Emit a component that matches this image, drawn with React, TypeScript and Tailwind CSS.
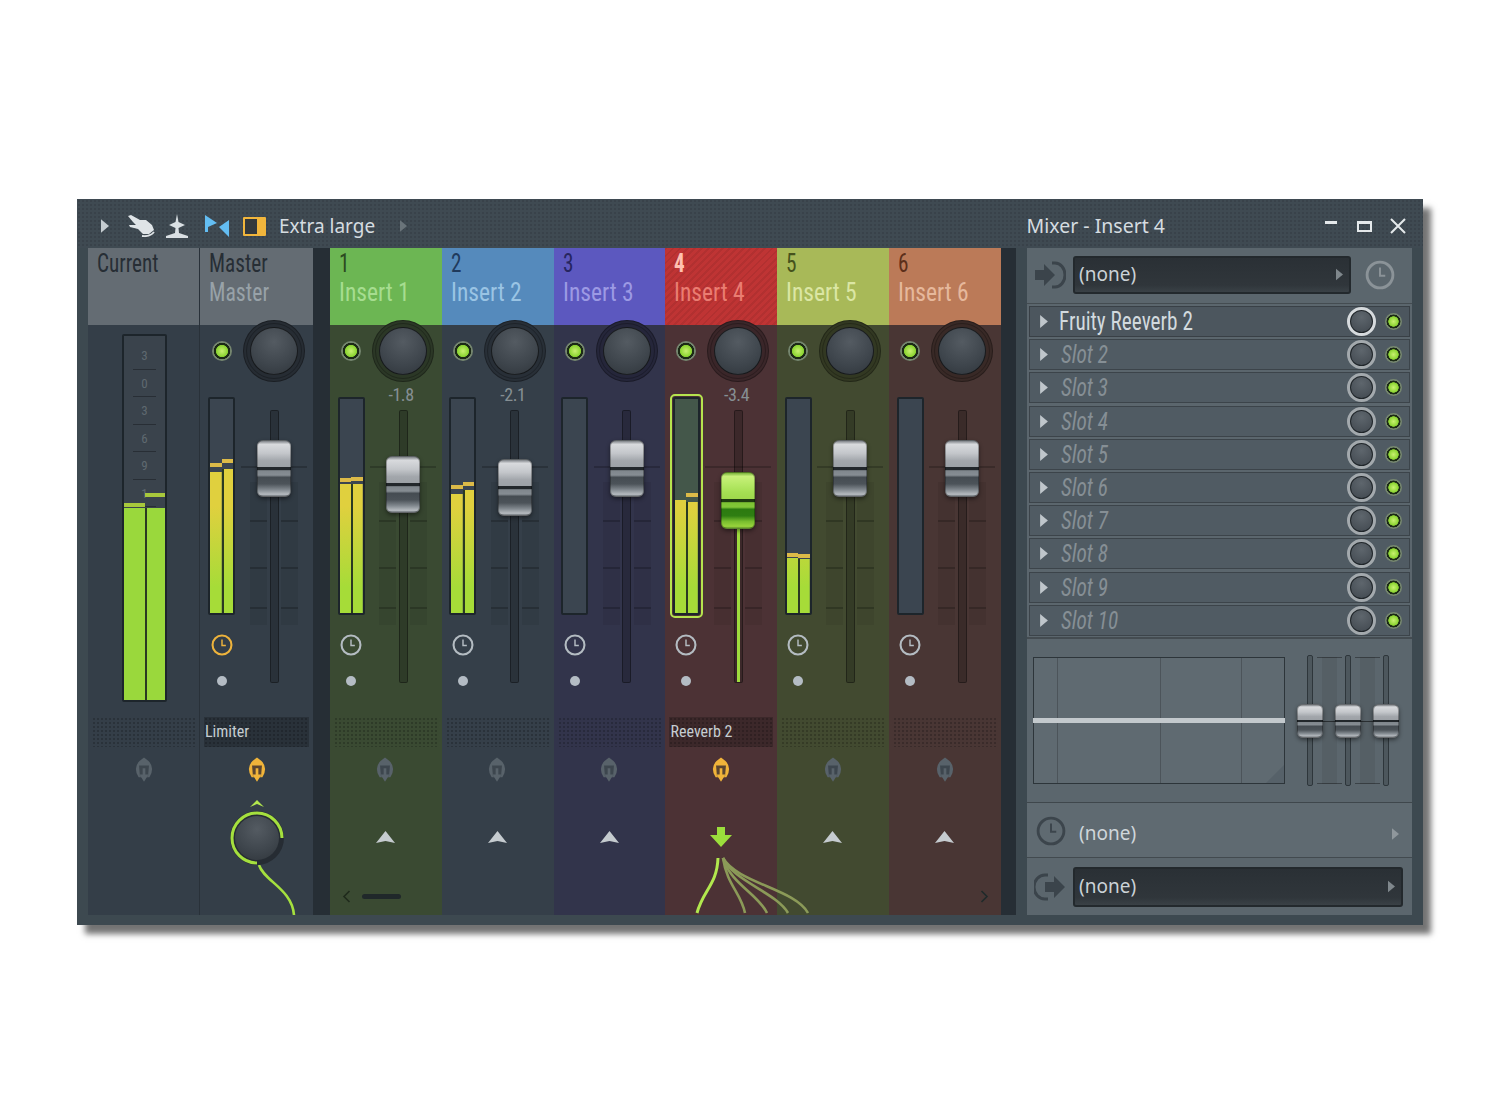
import React from 'react';

const narrow = "font-['Liberation_Sans_Narrow','Roboto_Condensed','Liberation_Sans',sans-serif]";
const ui = "font-['Noto_Sans','Open_Sans',sans-serif]";
const dots = "bg-[radial-gradient(circle,rgba(0,0,0,0.2)_1px,transparent_1.2px)] bg-[length:4px_4px]";

const silver = "bg-[linear-gradient(180deg,#7d8186_0%,#d8dadd_6%,#c4c7cb_22%,#a2a6ab_36%,#9ca1a6_47%,#22272b_48%,#22272b_52%,#7f868c_54%,#868d93_62%,#454c52_66%,#4c5359_78%,#7e858b_88%,#b6bbc0_97%,#6f757a_100%)]";
const lime = "bg-[linear-gradient(180deg,#79b23a_0%,#c8f07a_6%,#b4e864_22%,#a4de52_36%,#9fd84c_47%,#1e3a10_48%,#1e3a10_52%,#7dc233_54%,#82c638_62%,#2c7a10_66%,#2f7e12_78%,#78bd2e_88%,#98d43c_97%,#62952a_100%)]";

type Level = { top: number; peak: number };

interface StripData {
  num: string;
  name: string;
  head: string;
  body: string;
  ring: string;
  numText: string;
  nameText: string;
  value?: string;
  handle: number;
  levels?: [Level, Level];
  selected?: boolean;
}

const inserts: StripData[] = [
  { num: '1', name: 'Insert 1', head: 'bg-[#6cb653]', body: 'bg-[#3a4a32]', ring: 'bg-[#2b3726]', numText: 'text-[#2b4a20]', nameText: 'text-[#a6dd90]', value: '-1.8', handle: 456, levels: [{ top: 484, peak: 478 }, { top: 484, peak: 477 }] },
  { num: '2', name: 'Insert 2', head: 'bg-[#558abc]', body: 'bg-[#353f49]', ring: 'bg-[#282f37]', numText: 'text-[#1f3a5c]', nameText: 'text-[#9ac4e4]', value: '-2.1', handle: 459, levels: [{ top: 494, peak: 485 }, { top: 490, peak: 482 }] },
  { num: '3', name: 'Insert 3', head: 'bg-[#5c58bf]', body: 'bg-[#32344b]', ring: 'bg-[#25263a]', numText: 'text-[#262560]', nameText: 'text-[#9c9ae4]', handle: 440 },
  { num: '4', name: 'Insert 4', head: 'bg-[#bf3434] bg-[repeating-linear-gradient(135deg,rgba(0,0,0,0.07)_0px,rgba(0,0,0,0.07)_2px,transparent_2px,transparent_5px)]', body: 'bg-[#4c3235]', ring: 'bg-[#3a2629]', numText: 'text-[#ffc0b0] font-bold', nameText: 'text-[#ea7d72]', value: '-3.4', handle: 472, levels: [{ top: 500, peak: 500 }, { top: 502, peak: 493 }], selected: true },
  { num: '5', name: 'Insert 5', head: 'bg-[#a8b958]', body: 'bg-[#424a30]', ring: 'bg-[#323822]', numText: 'text-[#46521c]', nameText: 'text-[#dbe6a4]', handle: 440, levels: [{ top: 558, peak: 553 }, { top: 559, peak: 554 }] },
  { num: '6', name: 'Insert 6', head: 'bg-[#bb7a58]', body: 'bg-[#493634]', ring: 'bg-[#382926]', numText: 'text-[#5c2f1a]', nameText: 'text-[#e6b89c]', handle: 440 },
];

const slots = ['Fruity Reeverb 2', 'Slot 2', 'Slot 3', 'Slot 4', 'Slot 5', 'Slot 6', 'Slot 7', 'Slot 8', 'Slot 9', 'Slot 10'];

function Tri({ className }: { className: string }) {
  return (
    <svg width="9" height="15" viewBox="0 0 9 15" className={className}>
      <path d="M0 0 L9 7.5 L0 15 Z" fill="currentColor" />
    </svg>
  );
}

function Led({ small }: { small?: boolean }) {
  return (
    <div className={`${small ? 'w-[17px] h-[17px]' : 'w-[20px] h-[20px]'} shrink-0 rounded-full bg-[radial-gradient(circle_closest-side,#c8f070_0%,#92d838_50%,#86cc30_58%,#1c2a16_64%,#1c2a16_80%,#75866f_84%,#75866f_100%)]`} />
  );
}

function Knob({ ring }: { ring: string }) {
  return (
    <div className={`w-[62px] h-[62px] shrink-0 rounded-full ${ring} border border-black/30 flex items-center justify-center`}>
      <div className="w-[56px] h-[56px] rounded-full border border-black/25 flex items-center justify-center">
        <div className="w-[48px] h-[48px] rounded-full border border-black/60 bg-[radial-gradient(circle_at_50%_30%,#545b62,#3e454c_60%,#2f353b)]" />
      </div>
    </div>
  );
}

function Clock({ size, color }: { size: number; color: string }) {
  return (
    <svg width={size} height={size} viewBox="0 0 20 20" className={color}>
      <circle cx="10" cy="10" r="8.6" fill="none" stroke="currentColor" strokeWidth="1.9" />
      <path d="M10 5 V10.5 H13.5" fill="none" stroke="currentColor" strokeWidth="1.3" />
    </svg>
  );
}

function Headset({ color, inner }: { color: string; inner: string }) {
  return (
    <svg width="18" height="28" viewBox="0 0 20 28" className={color}>
      <path d="M10 0 L15 4 Q19 8 19 13 Q19 18 16 22 L4 22 Q1 18 1 13 Q1 8 5 4 Z" fill="currentColor" />
      <path d="M4.5 9 H15.5 L14.5 21 H5.5 Z" fill={inner} />
      <path d="M8.5 12 H11.5 V19 H15 L10 27 L5 19 H8.5 Z" fill="currentColor" />
    </svg>
  );
}

function Meter({ levels, selected, className }: { levels?: [Level, Level]; selected?: boolean; className: string }) {
  return (
    <div className={`relative rounded-[2px] border-2 border-[#1d252b] flex items-stretch ${selected ? 'bg-[#44574a] outline-2 outline-offset-[1px] outline-[#b6e44e]' : 'bg-[#3b4550]'} ${className}`}>
      {[0, 1].map((i) => {
        const level = levels ? levels[i] : undefined;
        return (
          <div key={i} className="relative flex-1">
            {level && (
              <>
                <div
                  className="absolute left-0 right-0 h-[4px] bg-[#dcba48]"
                  style={{ top: level.peak - 399 }}
                />
                <div
                  className={`absolute left-0 right-0 bottom-0 bg-[linear-gradient(180deg,#e0d03e_0%,#e0d03e_50%,#a6dc38_88%)] bg-[length:100%_214px] bg-bottom ${i === 1 ? 'border-l-2 border-[#2a3a22]' : ''}`}
                  style={{ height: 613 - level.top }}
                />
              </>
            )}
          </div>
        );
      })}
    </div>
  );
}

function FaderScale() {
  return (
    <svg width="74" height="273" viewBox="0 0 74 273" className="absolute left-[-6px] top-[26px] text-black/40">
      <path d="M4 57 H70" stroke="currentColor" strokeWidth="1" />
      {[111, 158, 198].map((y) => (
        <path key={y} d={`M13 ${y} H30 M44 ${y} H61`} stroke="currentColor" strokeWidth="1" />
      ))}
      <path d="M13 72 V215 H30 V72 M44 72 V215 H61 V72" fill="rgba(0,0,0,0.06)" stroke="none" />
    </svg>
  );
}

function Handle({ tone, className }: { tone: string; className: string }) {
  return <div className={`rounded-[6px] border border-black/30 shadow-[0_2px_4px_rgba(0,0,0,0.45)] ${tone} ${className}`} />;
}

function Fader({ value, handle, selected }: { value?: string; handle: number; selected?: boolean }) {
  return (
    <div className="relative w-[62px] h-[299px] flex flex-col items-center">
      <div className="h-[26px] text-[#868f93] text-[18px] leading-[20px] tracking-tight w-full text-center pr-[4px] relative">
        <span className={narrow}>{value}</span>
      </div>
      <FaderScale />
      <div className="relative w-[9px] h-[273px] bg-black/20 border border-black/35 rounded-[2px]">
        {selected && <div className="absolute left-[2px] w-[3px] top-[110px] bottom-0 bg-[#9fdc3e]" />}
      </div>
      <div className="absolute left-[14px]" style={{ top: handle - 384 }}>
        <Handle tone={selected ? lime : silver} className="w-[34px] h-[57px]" />
      </div>
    </div>
  );
}

function FxLabel({ text, tall }: { text?: string; tall?: boolean }) {
  return (
    <div className={`mx-[4px] h-[30px] flex items-center pl-[1px] ${tall ? 'bg-black/20' : ''} ${dots} ${narrow} text-[16px] text-[#c6ced2]`}>
      {text}
    </div>
  );
}

function UpArrow() {
  return (
    <svg width="19" height="13" viewBox="0 0 19 13" className="text-[#c5cbcf]">
      <path d="M9.5 0 L19 12 L9.5 10 L0 12 Z" fill="currentColor" />
    </svg>
  );
}

function Header({ head, num, name, numText, nameText, squeeze }: { head: string; num: string; name?: string; numText: string; nameText: string; squeeze?: boolean }) {
  return (
    <div className={`h-[77px] pl-[9px] ${narrow} ${head}`}>
      <div className={`text-[25px] leading-[28px] pt-[2px] h-[31px] whitespace-nowrap origin-left scale-x-[0.85] ${numText}`}>{num}</div>
      <div className={`text-[25px] leading-[28px] whitespace-nowrap origin-left ${squeeze ? 'scale-x-[0.87]' : 'scale-x-[0.94]'} ${nameText}`}>{name}</div>
    </div>
  );
}

function InsertStrip({ s, index }: { s: StripData; index: number }) {
  return (
    <div className={`relative flex-1 flex flex-col ${s.body} ${s.selected ? 'z-10' : ''}`}>
      <Header head={s.head} num={s.num} name={s.name} numText={s.numText} nameText={s.nameText} />
      <div className="flex items-center h-[66px] -mt-[7px] relative">
        <div className="w-[42px] flex justify-center"><Led /></div>
        <div className="w-[62px] flex justify-center"><Knob ring={s.ring} /></div>
      </div>
      <div className="flex">
        <div className="w-[42px] flex flex-col items-center pt-[13px]">
          <Meter levels={s.levels} selected={s.selected} className="w-[27px] h-[218px]" />
          <div className="mt-[19px]"><Clock size={22} color="text-[#b4bcc2]" /></div>
          <div className="mt-[20px] w-[10px] h-[10px] rounded-full bg-[#b4bcc4]" />
        </div>
        <Fader value={s.value} handle={s.handle} selected={s.selected} />
      </div>
      <div className="mt-[31px]"><FxLabel text={s.selected ? 'Reeverb 2' : undefined} tall={s.selected} /></div>
      <div className="flex justify-center pt-[9px] pr-[1px] h-[37px]">
        {s.selected ? <Headset color="text-[#f0b43a]" inner="#5a4530" /> : <Headset color="text-[#58626a]" inner="#3d464e" />}
      </div>
      <div className="flex justify-center mt-[41px] h-[24px] items-center pr-[1px]">
        {s.selected ? (
          <svg width="22" height="20" viewBox="0 0 22 20" className="text-[#9bde3c]">
            <path d="M7 0 H15 V8 H22 L11 20 L0 8 H7 Z" fill="currentColor" />
          </svg>
        ) : (
          <UpArrow />
        )}
      </div>
      {s.selected && (
        <svg width="150" height="60" viewBox="0 0 150 60" fill="none" className="absolute left-0 bottom-0 overflow-visible">
          <path d="M53 3 C52 30 38 35 32 58" stroke="#b2e84e" strokeWidth="3" />
          <path d="M58 3 C62 30 76 38 80 58" stroke="#8b9a58" strokeWidth="2.6" />
          <path d="M58 3 C65 28 94 40 102 58" stroke="#8b9a58" strokeWidth="2.6" />
          <path d="M58 3 C68 26 112 38 123 58" stroke="#8b9a58" strokeWidth="2.6" />
          <path d="M58 3 C72 28 130 34 143 58" stroke="#8b9a58" strokeWidth="2.6" />
        </svg>
      )}
      {index === 0 && (
        <div className="absolute left-[12px] right-[40px] bottom-[12px] flex items-center gap-[11px]">
          <svg width="9" height="13" viewBox="0 0 9 13"><path d="M7.5 1 L2 6.5 L7.5 12" fill="none" stroke="#1f2a1c" strokeWidth="1.6" /></svg>
          <div className="w-[39px] h-[5px] rounded-full bg-[#20282a]" />
        </div>
      )}
      {index === 5 && (
        <div className="absolute right-[12px] bottom-[12px]">
          <svg width="9" height="13" viewBox="0 0 9 13"><path d="M1.5 1 L7 6.5 L1.5 12" fill="none" stroke="#1f2a2a" strokeWidth="1.6" /></svg>
        </div>
      )}
    </div>
  );
}

function CurrentStrip() {
  const base = 336;
  return (
    <div className="relative w-[112px] flex flex-col border-r border-black/20 bg-[#343e48]">
      <Header head="bg-[#646c73]" num="Current" numText="text-[#272e35]" nameText="" />
      <div className="flex justify-center pt-[9px] pl-[2px]">
        <div className="relative w-[45px] h-[368px] bg-[#3a434c] border-2 border-[#1d252b] rounded-[2px] pt-[6px]">
          {['3', '0', '3', '6', '9', '1'].map((t, i) => (
            <div key={i} className={`${narrow} h-[27.5px] mx-[9px] border-b border-black/30 text-center text-[13px] leading-[27px] text-[#5f6970]`}>{t}</div>
          ))}
          <div className="absolute inset-0 flex">
            {[0, 1].map((i) => (
              <div key={i} className="relative flex-1">
                <div className="absolute left-0 right-0 h-[4px] bg-[#a8c83c]" style={{ top: (i ? 493 : 503) - base }} />
                <div className={`absolute left-0 right-0 bottom-0 bg-[#9ad83c] ${i === 1 ? 'border-l-2 border-[#2a3a22]' : ''}`} style={{ top: 508 - base }} />
              </div>
            ))}
          </div>
        </div>
      </div>
      <div className="mt-[15px]"><FxLabel /></div>
      <div className="flex justify-center pt-[9px] pl-[1px]"><Headset color="text-[#58626a]" inner="#3d464e" /></div>
    </div>
  );
}

function MasterStrip() {
  return (
    <div className="relative w-[113px] flex flex-col bg-[#343e48]">
      <Header head="bg-[#646c73]" num="Master" name="Master" numText="text-[#272e35]" nameText="text-[#98a2a8]" squeeze />
      <div className="flex items-center h-[66px] -mt-[7px] relative">
        <div className="w-[43px] flex justify-center"><Led /></div>
        <div className="w-[62px] flex justify-center"><Knob ring="bg-[#262c33]" /></div>
      </div>
      <div className="flex">
        <div className="w-[43px] flex flex-col items-center pt-[13px]">
          <Meter levels={[{ top: 472, peak: 463 }, { top: 469, peak: 459 }]} className="w-[27px] h-[218px]" />
          <div className="mt-[19px]"><Clock size={22} color="text-[#eeb33c]" /></div>
          <div className="mt-[20px] w-[10px] h-[10px] rounded-full bg-[#b4bcc4]" />
        </div>
        <Fader handle={440} />
      </div>
      <div className="mt-[31px]"><FxLabel text="Limiter" tall /></div>
      <div className="flex justify-center pt-[9px] h-[37px]"><Headset color="text-[#f0b43a]" inner="#5a4530" /></div>
      <div className="flex flex-col items-center mt-[15px]">
        <svg width="14" height="8" viewBox="0 0 14 8"><path d="M0 8 L7 1 L14 8 L7 5 Z" fill="#b2e84e" /></svg>
        <div className="mt-[4px] w-[54px] h-[54px] rounded-full bg-[#262c33] flex items-center justify-center relative">
          <div className="w-[44px] h-[44px] rounded-full bg-[radial-gradient(circle_at_50%_30%,#545b62,#3e454c_60%,#2f353b)]" />
          <svg width="54" height="54" viewBox="0 0 54 54" className="absolute inset-0">
            <path d="M27 52 A25 25 0 1 1 52 27" fill="none" stroke="#a5e03e" strokeWidth="3" />
          </svg>
        </div>
      </div>
      <svg width="60" height="50" viewBox="0 0 60 50" fill="none" className="absolute left-[56px] bottom-0">
        <path d="M3 0 C8 16 36 24 38 50" stroke="#a5e03e" strokeWidth="2.6" />
      </svg>
    </div>
  );
}

function SlotRow({ label, active }: { label: string; active: boolean }) {
  return (
    <div className={`h-[31px] mb-[2.2px] flex items-center mx-[2px] border border-black/25 ${active ? 'bg-[#4c565e]' : 'bg-[#505b63]'}`}>
      <Tri className="ml-[10px] text-[#bfc6cb] w-[8px] h-[13px]" />
      <div className={`flex-1 ${narrow} text-[25px] leading-none whitespace-nowrap origin-left scale-x-[0.85] ${active ? 'ml-[11px] text-[#d2dade]' : 'ml-[13px] text-[#868f95] italic'}`}>{label}</div>
      <div className={`w-[29px] h-[29px] rounded-full border-[3px] ${active ? 'border-[#d6dadd]' : 'border-[#a3a9ad]'} bg-[#1f2529] p-[1px] mr-[9px] shrink-0`}>
        <div className="w-full h-full rounded-full bg-[radial-gradient(circle_at_50%_30%,#5e666d,#41484f)]" />
      </div>
      <div className="mr-[7px]"><Led small /></div>
    </div>
  );
}

function MiniFader({ side }: { side?: boolean }) {
  return (
    <div className="relative w-[26px] h-[131px] flex justify-center">
      {side && (
        <div className="absolute left-[20px] top-[2px] w-[25px] h-[127px] border-y border-black/35 bg-[linear-gradient(90deg,transparent_20%,rgba(0,0,0,0.07)_20%,rgba(0,0,0,0.07)_80%,transparent_80%)]">
          <div className="mt-[63px] h-px bg-black/50" />
        </div>
      )}
      <div className="relative w-[6px] h-full bg-[#4d575d] border border-[#2e363b] rounded-[2px]" />
      <Handle tone={silver} className="absolute left-0 top-[49px] w-[26px] h-[34px]" />
    </div>
  );
}

function InOutIcon({ flip }: { flip?: boolean }) {
  return (
    <svg width="32" height="30" viewBox="0 0 32 30" className="text-[#3b444b]">
      {flip ? (
        <>
          <path d="M14 3 H11 A11 12 0 0 0 11 27 H14" fill="none" stroke="currentColor" strokeWidth="3" />
          <path d="M11 10 H20 V4 L31 15 L20 26 V20 H11 Z" fill="currentColor" />
        </>
      ) : (
        <>
          <path d="M18 3 H21 A10 12 0 0 1 21 27 H18" fill="none" stroke="currentColor" strokeWidth="3" />
          <path d="M1 10 H10 V4 L21 15 L10 26 V20 H1 Z" fill="currentColor" />
        </>
      )}
    </svg>
  );
}

function NoneBox({ className }: { className: string }) {
  return (
    <div className={`flex items-center justify-between rounded-[3px] border-2 border-[#23292d] bg-[linear-gradient(180deg,#2a3035,#30363b_80%,#3a4146)] pl-[4px] pr-[6px] ${ui} text-[19px] text-[#cbd2d6] ${className}`}>
      (none)
      <Tri className="w-[7px] h-[13px] text-[#7f878c]" />
    </div>
  );
}

function RightPanel() {
  return (
    <div className="w-[385px] bg-[#5b666d] flex flex-col">
      <div className="h-[56px] pb-[2px] flex items-center border-b border-black/25">
        <div className="w-[46px] flex justify-center"><InOutIcon /></div>
        <NoneBox className="w-[278px] h-[38px]" />
        <div className="ml-[14px]"><Clock size={30} color="text-[#8b9398]" /></div>
      </div>
      <div className="h-[335px] pt-[2px] flex flex-col border-b-2 border-black/25">
        {slots.map((s, i) => (
          <SlotRow key={s} label={s} active={i === 0} />
        ))}
      </div>
      <div className="h-[164px] flex pl-[6px] pt-[18px] border-b border-black/30">
        <div className="relative w-[252px] h-[127px] border border-[#2d353a] bg-[#5f6a71] flex">
          <div className="w-[24px] border-r border-black/20" />
          <div className="w-[103px] border-r border-black/20" />
          <div className="w-[81px] border-r border-black/20" />
          <div className="absolute -left-[1px] -right-[1px] top-[60px] h-[5px] bg-[#c3c9cd]" />
          <svg width="18" height="18" viewBox="0 0 18 18" className="absolute right-0 bottom-0"><path d="M18 0 V18 H0 Z" fill="#566169" /></svg>
        </div>
        <div className="ml-[12px] -mt-[2px] flex gap-[12px]">
          <MiniFader side />
          <MiniFader side />
          <MiniFader />
        </div>
      </div>
      <div className="h-[55px] pt-[2px] flex items-center border-b border-black/30 bg-[#5f6a71]">
        <div className="w-[46px] flex justify-center pl-[1px]"><Clock size={30} color="text-[#3c454c]" /></div>
        <div className={`flex-1 pl-[6px] pt-[5px] ${ui} text-[19px] text-[#cfd6da]`}>(none)</div>
        <Tri className="w-[7px] h-[14px] mt-[5px] mr-[13px] text-[#8f979c]" />
      </div>
      <div className="flex-1 flex items-center">
        <div className="w-[46px] flex justify-center"><InOutIcon flip /></div>
        <NoneBox className="w-[330px] h-[40px]" />
      </div>
    </div>
  );
}

function TitleIcons() {
  return (
    <div className="flex items-center">
      <Tri className="ml-[24px] w-[8px] h-[14px] text-[#c6cdd1]" />
      <svg width="28" height="22" viewBox="0 0 28 22" className="ml-[18px] text-[#dfe4e7]">
        <path d="M1 1 L4 0 L13 5 L19 5 L25 10 L27 15 L22 19 L16 19 L11 14 L3 12 L2 10 L9 10 L6 7 Z" fill="currentColor" />
        <path d="M15 21 Q23 22 27 17" fill="none" stroke="currentColor" strokeWidth="1.8" />
      </svg>
      <svg width="22" height="24" viewBox="0 0 22 24" className="ml-[11px] text-[#d9dfe3]">
        <path d="M11 0 L12.5 8 L19 11 L12.5 14 L13 19 Q16 20 22 22 V24 H0 V22 Q6 20 9 19 L9.5 14 L3 11 L9.5 8 Z" fill="currentColor" />
      </svg>
      <svg width="25" height="22" viewBox="0 0 25 22" className="ml-[17px] text-[#63bdf2]">
        <path d="M0 0 L12 8 L3 12 L3 17 L0 17 Z M24 5 V22 L14 12 Z" fill="currentColor" />
      </svg>
      <div className="ml-[13px] w-[23px] h-[19px] border-2 border-[#f2b63c] rounded-[1px] flex justify-end bg-[#34393c]">
        <div className="w-[7px] h-full bg-[#f2b63c]" />
      </div>
      <div className={`ml-[13px] ${ui} text-[19px] text-[#d5dce0] w-[96px] whitespace-nowrap`}>Extra large</div>
      <Tri className="ml-[25px] w-[7px] h-[14px] text-[#6a747a]" />
    </div>
  );
}

export default function App() {
  return (
    <div className="min-h-[1112px] bg-white pt-[199px] pl-[77px]">
      <div className="w-[1346px] h-[726px] bg-[#3d4950] shadow-[8px_9px_6px_rgba(0,0,0,0.55)] flex flex-col">
        <div className="h-[49px] pt-[5px] flex items-center justify-between bg-[#3f4a52] bg-[radial-gradient(circle,rgba(0,0,0,0.1)_1px,transparent_1.2px)] bg-[length:4px_4px]">
          <TitleIcons />
          <div className="flex items-center">
            <div className={`${ui} text-[19.5px] text-[#d5dce0] whitespace-nowrap mr-[160px]`}>Mixer - Insert 4</div>
            <div className="w-[12px] h-[3px] bg-[#e4e8ea] -mt-[8px] mr-[20px]" />
            <div className="w-[15px] h-[11px] border-2 border-t-[3px] border-[#e4e8ea] mr-[18px]" />
            <svg width="16" height="16" viewBox="0 0 16 16" className="mr-[17px] text-[#e4e8ea]">
              <path d="M1 1 L15 15 M15 1 L1 15" stroke="currentColor" strokeWidth="2" />
            </svg>
          </div>
        </div>
        <div className="flex h-[667px] px-[11px]">
          <div className="flex w-[225px]">
            <CurrentStrip />
            <MasterStrip />
          </div>
          <div className="w-[17px] bg-[#262e35]" />
          <div className="flex w-[671px]">
            {inserts.map((s, i) => (
              <InsertStrip key={s.num} s={s} index={i} />
            ))}
          </div>
          <div className="w-[15px] bg-[#262e35]" />
          <div className="w-[11px]" />
          <RightPanel />
        </div>
      </div>
    </div>
  );
}
